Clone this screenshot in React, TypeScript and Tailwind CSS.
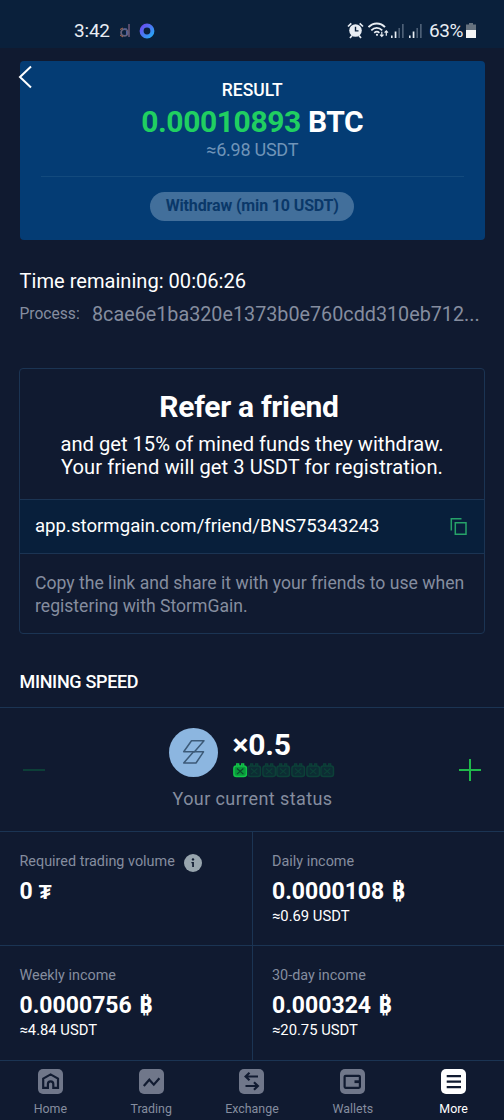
import React from "react";

const BORDER = "border-[#1b3453]";

function StatusBar() {
  return (
    <header className="flex h-12 shrink-0 items-start bg-[#0a203b] pt-[19px] text-[#e8edf3]">
      <span className="ml-[74px] w-[37px] text-[19px] leading-6 tracking-[-0.2px]">3:42</span>
      <svg className="ml-[7px] mt-[4px]" width="14" height="16" viewBox="0 0 14 16" fill="none">
        <path d="M11 1v13" stroke="#5f5070" strokeWidth="1.8" />
        <circle cx="6.5" cy="9.5" r="3.4" stroke="#66627a" strokeWidth="1.8" />
        <path d="M2 6.5 5 5M2 12l3 2" stroke="#b06a4c" strokeWidth="1" />
        <path d="M8.6 8v4M6 6h3" stroke="#4a5fa0" strokeWidth="1.2" />
      </svg>
      <svg className="ml-[7px] mt-[4px]" width="16" height="16" viewBox="0 0 16 16" fill="none">
        <defs>
          <linearGradient id="ring" x1="0" y1="0" x2="1" y2="1">
            <stop offset="0" stopColor="#6a4cf0" />
            <stop offset="1" stopColor="#27a8f5" />
          </linearGradient>
        </defs>
        <circle cx="8" cy="8" r="5.4" stroke="url(#ring)" strokeWidth="4" />
      </svg>

      <div className="ml-auto flex items-start pr-7">
        {/* alarm */}
        <svg className="-ml-px mt-[3px]" width="17" height="17" viewBox="0 0 17 17" fill="none">
          <circle cx="8.5" cy="8.5" r="6.3" fill="#e8edf3" />
          <path d="M1 4.5 4.3 1.3M16 4.5l-3.3-3.2M3 16l2-2.5M14 16l-2-2.5" stroke="#e8edf3" strokeWidth="1.7" />
          <path d="M8.5 4.8v4.1h3" stroke="#0a203b" strokeWidth="1.4" />
        </svg>
        {/* wifi */}
        <svg className="ml-[4px] mt-[3px]" width="21" height="17" viewBox="0 0 21 17" fill="none" stroke="#e8edf3">
          <path d="M.5 5.2C5 .2 12.5 .2 17 5.2" strokeWidth="1.9" />
          <path d="M3.3 8.3c3.2-3.2 7.7-3.2 10.9 0" strokeWidth="1.8" />
          <path d="M6.2 10.9c1.6-1.4 3.8-1.4 5.2 0" strokeWidth="1.6" />
          <circle cx="9" cy="12.8" r="1.1" fill="#e8edf3" stroke="none" />
          <path d="M13.8 9.8v4.6m-1.7-1.7 1.7 1.8 1.7-1.8M18.3 13.8V9m-1.7 1.7 1.7-1.8 1.7 1.8" strokeWidth="1.2" />
        </svg>
        <Signal className="ml-[2px]" />
        <Signal className="ml-[5px]" />
        <span className="ml-[7px] w-[35px] text-[19px] leading-6 tracking-[-0.4px]">63%</span>
        <svg className="ml-[2px] mt-[4px]" width="10" height="15" viewBox="0 0 10 15">
          <path d="M3 0h4v1.5h3V7H0V1.5h3z" fill="#66727f" />
          <path d="M0 7h10v8H0z" fill="#f4f5f6" />
        </svg>
      </div>
    </header>
  );
}

function Signal({ className }: { className: string }) {
  return (
    <svg className={`mt-[5px] ${className}`} width="13" height="14" viewBox="0 0 13 14">
      <path d="M0 11.5h1.6V14H0zM3.7 7.5h1.7V14H3.7z" fill="#e8edf3" />
      <path d="M7.4 4H9v10H7.4zM11 0h1.7v14H11z" fill="#4c5f76" />
    </svg>
  );
}

function ResultCard() {
  return (
    <section className="relative ml-[19.5px] mr-[19px] mt-[12.5px] flex h-[179.5px] shrink-0 flex-col items-center rounded-[4px] bg-[#043c74] px-[21px]">
      <button className="absolute -left-[1.5px] top-[4.5px]">
        <svg width="14" height="24" viewBox="0 0 14 24" fill="none" stroke="#fff" strokeWidth="2">
          <path d="M13 1.5 2 12l11 10.5" />
        </svg>
      </button>
      <h2 className="mt-[19.5px] text-[17.5px] font-medium leading-5 text-white">RESULT</h2>
      <p className="mt-[4px] text-[30px] font-bold leading-9 tracking-[-0.4px] text-white">
        <span className="text-[#20cf61]">0.00010893</span> BTC
      </p>
      <p className="text-[18px] leading-5 tracking-[-0.25px] text-[#7094b8]">≈6.98 USDT</p>
      <div className="mt-[16px] h-px w-full shrink-0 bg-[#134a7d]" />
      <button className="mt-[14.5px] h-[29px] w-[204px] shrink-0 rounded-full bg-[#426f9b] text-[16px] font-bold leading-7 tracking-[-0.14px] text-[#0a3869]">
        Withdraw (min 10 USDT)
      </button>
    </section>
  );
}

function ReferCard() {
  return (
    <section className={`mx-[19px] mt-[39px] flex h-[266px] shrink-0 flex-col rounded-[4px] border ${BORDER}`}>
      <div className="h-[130px] text-center text-white">
        <h2 className="pr-[6px] pt-[20px] text-[30px] font-bold leading-9 tracking-[-0.3px]">Refer a friend</h2>
        <p className="mt-[8px] whitespace-nowrap text-[20.15px] leading-[23px]">
          and get 15% of mined funds they withdraw.
          <br />
          <span className="tracking-[0.05px]">Your friend will get 3 USDT for registration.</span>
        </p>
      </div>
      <div className={`flex h-[55px] items-center justify-between border-y bg-[#081f3b] pl-[15px] pr-[17px] ${BORDER}`}>
        <span className="text-[18.63px] text-white">app.stormgain.com/friend/BNS75343243</span>
        <svg className="-mt-px" width="17" height="17" viewBox="0 0 17 17" fill="none" stroke="#26a269" strokeWidth="1.5">
          <path d="M1.3 12.5V.8H11.5" />
          <path d="M5.3 4.8H16v11.4H5.3z" />
        </svg>
      </div>
      <p className="pl-[15px] pt-[18px] text-[17.6px] leading-[22.5px] text-[#858d9f]">
        Copy the link and share it with your friends to use when
        <br />
        registering with StormGain.
      </p>
    </section>
  );
}

function Chip({ active }: { active: boolean }) {
  const color = active ? "#12c748" : "#0c4038";
  return (
    <svg width="14.67" height="15" viewBox="0 0 14.67 15" fill="none" stroke={color}>
      <rect x=".9" y="3" width="12.6" height="10.6" rx="2.5" strokeWidth="1.5" fill={active ? "#0a9a3c" : "#0d2c34"} />
      <path d="M3.7 3V1h2v2M8.7 3V1h2v2" strokeWidth="1.3" />
      <path d="m4 5.5 6.4 5.6m0-5.6L4 11.1" stroke={active ? "#0b4a2c" : color} strokeWidth="1.2" />
    </svg>
  );
}

function MiningSpeed() {
  return (
    <section className={`flex h-[125px] shrink-0 items-start border-y ${BORDER}`}>
      <button className="ml-[23px] mt-[61px] h-[2px] w-[22px] bg-[#0d3f38]" />
      <div className="ml-[124px] w-[190px] pt-[20px]">
        <div className="flex">
          <svg width="49" height="49" viewBox="0 0 49 49">
            <circle cx="24.5" cy="24.5" r="24.5" fill="#8cb6e0" />
            <g fill="none" stroke="#3c5a78" strokeWidth="1.5" strokeLinejoin="round">
              <path d="M22.5 12.7H35L25.5 23.8H14.7z" />
              <path d="M24.5 23.8h10L27 35H14.7z" />
            </g>
          </svg>
          <div className="ml-[14.5px]">
            <div className="h-[33px] text-[30px] font-bold leading-[34px] tracking-[-0.2px] text-white">×0.5</div>
            <div className="mt-[2px] flex">
              {[0, 1, 2, 3, 4, 5, 6].map((i) => (
                <Chip key={i} active={i === 0} />
              ))}
            </div>
          </div>
        </div>
        <p className="ml-[3.5px] mt-[9px] whitespace-nowrap text-[18px] leading-6 tracking-[0.41px] text-[#858d9f]">Your current status</p>
      </div>
      <button className="ml-auto mr-[23px] mt-[51px]">
        <svg width="22" height="22" viewBox="0 0 22 22" stroke="#1fb94a" strokeWidth="2">
          <path d="M11 0v22M0 11h22" />
        </svg>
      </button>
    </section>
  );
}

type StatProps = {
  label: string;
  value: string;
  sign: string;
  usdt?: string;
  info?: boolean;
  className?: string;
};

function Stat({ label, value, sign, usdt, info, className = "" }: StatProps) {
  return (
    <div className={`pt-[20px] ${BORDER} ${className}`}>
      <div className="flex h-[20px] items-center text-[14.4px] leading-5 text-[#858d9f]">
        {label}
        {info && (
          <svg className="ml-[9px] mt-[2px]" width="18" height="18" viewBox="0 0 18 18">
            <circle cx="9" cy="9" r="9" fill="#98a5ae" />
            <circle cx="9" cy="5.4" r="1.2" fill="#101b30" />
            <path d="M7.4 8h2.5v5H8.2V9.2h-.8z" fill="#101b30" />
          </svg>
        )}
      </div>
      <div className="mt-[5px] flex h-[29px] items-baseline text-[23px] font-bold leading-[29px] text-white">
        <span>{value}</span>
        {sign === "₿" ? (
          <span className="ml-[7px] font-['Noto_Sans',sans-serif] text-[24px] leading-none">{sign}</span>
        ) : (
          <span className="ml-[6px] text-[21px] leading-none">{sign}</span>
        )}
      </div>
      {usdt && <div className="text-[14.8px] leading-5 text-white">{usdt}</div>}
    </div>
  );
}

const tabs = [
  {
    name: "Home",
    icon: <path d="M5.2 9.6 12.6 5.4 20 9.6v9.2h-4.7V15a2.7 2.7 0 0 0-5.4 0v3.8H5.2z" />,
  },
  { name: "Trading", icon: <path d="m4.8 17 5.5-6.3 4.5 5 5.6-6.4" /> },
  {
    name: "Exchange",
    icon: <path d="M19 7.5H7m3.5-3.8L6.6 7.500l3.9 3.8M6.5 17h12M15 13.2l3.9 3.8-3.9 3.8" />,
  },
  {
    name: "Wallets",
    icon: (
      <>
        <rect x="4.6" y="6.8" width="15.3" height="12" rx="1" />
        <path d="M20 12.7h-5.5" strokeWidth="2.8" />
      </>
    ),
  },
  { name: "More", icon: <path d="M5.7 7.2H20M5.7 12.7H20M5.7 18.1H20" /> },
];

function TabBar() {
  return (
    <nav className={`flex h-[60px] shrink-0 border-t ${BORDER}`}>
      {tabs.map((tab) => {
        const active = tab.name === "More";
        return (
          <a key={tab.name} className="flex flex-1 flex-col items-center pt-[8px]">
            <svg width="25" height="25" viewBox="0 0 25 25" fill="none" stroke="#111b31" strokeWidth="2.2">
              <rect width="25" height="25" rx="5" fill={active ? "#fff" : "#70778a"} stroke="none" />
              {tab.icon}
            </svg>
            <span className={`mt-[6.5px] text-[12.4px] leading-4 ${active ? "text-white" : "text-[#858d9f]"}`}>{tab.name}</span>
          </a>
        );
      })}
    </nav>
  );
}

export default function App() {
  return (
    <div className="flex h-[1120px] w-[504px] flex-col overflow-hidden bg-[#101a30] font-['Roboto',sans-serif]">
      <StatusBar />
      <ResultCard />

      <div className="ml-[19.5px] mt-[28px]">
        <p className="text-[20.1px] leading-[26px] text-white">Time remaining: 00:06:26</p>
        <div className="mt-[7px] flex h-[28px] items-center whitespace-nowrap text-[#858d9f]">
          <span className="w-[72.5px] text-[15.6px]">Process:</span>
          <span className="text-[19.75px]">8cae6e1ba320e1373b0e760cdd310eb712...</span>
        </div>
      </div>

      <ReferCard />

      <h3 className="ml-[19.5px] mt-[36px] h-[37px] text-[18px] font-medium leading-6 tracking-[-0.33px] text-white">MINING SPEED</h3>
      <MiningSpeed />

      <section className="grid h-[228px] shrink-0 grid-cols-2 grid-rows-2">
        <Stat label="Required trading volume" value="0" sign="₮" info className="border-b pl-[19.5px]" />
        <Stat label="Daily income" value="0.0000108" sign="₿" usdt="≈0.69 USDT" className="border-b border-l pl-[19px]" />
        <Stat label="Weekly income" value="0.0000756" sign="₿" usdt="≈4.84 USDT" className="pl-[19.5px]" />
        <Stat label="30-day income" value="0.000324" sign="₿" usdt="≈20.75 USDT" className="border-l pl-[19px]" />
      </section>

      <TabBar />
    </div>
  );
}
